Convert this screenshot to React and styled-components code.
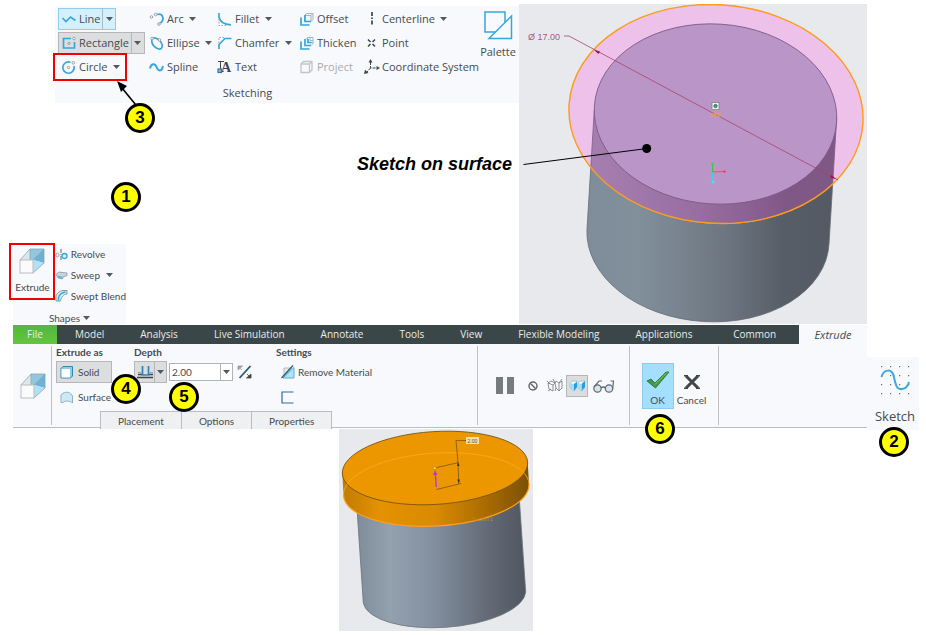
import React, { useState } from "react";
import styled, { createGlobalStyle, css } from "styled-components";

const GlobalStyle = createGlobalStyle`
  * {
    box-sizing: border-box;
  }

  body {
    margin: 0;
    background: #fff;
    color: #454b50;
    font-family: "Open Sans", "Noto Sans", sans-serif;
    font-size: 11px;
    line-height: 16px;
  }

  button,
  input {
    font: inherit;
    color: inherit;
    margin: 0;
    padding: 0;
    border: 0;
    background: none;
  }

  svg {
    display: block;
    flex: none;
  }
`;

const BLUE = "#36a7dd";
const GREY = "#9a9fa3";
const DARK = "#3f4447";

/* ---------- layout ---------- */

const Page = styled.main`
  padding-top: 4px;
`;

const TopRow = styled.section`
  display: grid;
  grid-template-columns: minmax(0, 1fr) 348px;
  margin-right: 59px;
`;

const LeftColumn = styled.div`
  display: flex;
  flex-direction: column;
`;

const DashboardRow = styled.section`
  display: flex;
  align-items: flex-start;
  margin: 1px 7px 0 13px;
`;

const ResultRow = styled.section`
  display: flex;
  justify-content: center;
  padding-right: 54px;
`;

/* ---------- callouts ---------- */

const Badge = styled.span`
  position: absolute;
  z-index: 2;
  left: ${(p) => p.$x}px;
  top: ${(p) => p.$y}px;
  width: 30px;
  height: 30px;
  border: 3px solid #000;
  border-radius: 50%;
  background: #ffff00;
  color: #000;
  font: bold 17px/24px "Liberation Sans", sans-serif;
  text-align: center;
`;

const Highlight = styled.span`
  position: absolute;
  inset: ${(p) => p.$inset};
  border: 2px solid #f00000;
  pointer-events: none;
`;

const Pointer = styled.svg`
  position: absolute;
  left: 58px;
  top: 72px;
`;

const Note = styled.p`
  align-self: flex-end;
  margin: 49px 7px 0 0;
  color: #000;
  font: italic bold 18px/24px "Liberation Sans", sans-serif;
`;

/* ---------- sketching ribbon ---------- */

const Ribbon = styled.div`
  position: relative;
  display: flex;
  margin: 2px 0 0 55px;
  height: 97px;
  padding-left: 3px;
  background: #f8f9fc;
`;

const ToolGroup = styled.div`
  flex: 1;
  min-width: 0;
`;

const ToolGrid = styled.div`
  display: grid;
  grid-template-columns: 88px 68px 82px 65px auto;
  grid-auto-rows: 24px;
  align-items: center;
  padding-top: 1px;
`;

const GroupLabel = styled.div`
  margin-top: 6px;
  padding-right: 40px;
  text-align: center;
`;

const Split = styled.div`
  position: relative;
  display: flex;
  justify-self: start;
  height: 22px;
  border: 1px solid transparent;
  white-space: nowrap;

  ${(p) =>
    p.$tone === "hover" &&
    css`
      background: #d5f0fd;
      border-color: #8fcdee;
    `}

  ${(p) =>
    p.$tone === "pressed" &&
    css`
      background: #dcddde;
      border-color: #b4b6b8;
    `}
`;

const Tool = styled.button`
  display: flex;
  align-items: center;
  gap: 2px;
  padding-left: 2px;
  opacity: ${(p) => (p.disabled ? 0.45 : 1)};
`;

const DropButton = styled.button`
  display: flex;
  align-items: center;
  justify-content: center;
  width: ${(p) => (p.$framed ? 13 : 10)}px;
  margin-left: ${(p) => (p.$framed ? 2 : 4)}px;
  border-left: ${(p) => (p.$framed ? "1px solid #a9bac4" : "0")};
`;

const PaletteButton = styled.button`
  display: flex;
  flex-direction: column;
  align-items: center;
  gap: 4px;
  width: 42px;
  padding-top: 4px;
  align-self: flex-start;
`;

/* ---------- shapes panel ---------- */

const Shapes = styled.div`
  position: relative;
  align-self: flex-start;
  margin: auto 0 0 13px;
  width: 113px;
  height: 80px;
  background: #f8f9fc;
  font-family: Lato, "Open Sans", sans-serif;
  font-size: 10px;
`;

const ShapesBody = styled.div`
  display: flex;
  height: 62px;
`;

const ExtrudeButton = styled.button`
  display: flex;
  flex-direction: column;
  align-items: center;
  gap: 6px;
  width: 39px;
  padding-top: 4px;
  line-height: 14px;
`;

const ShapeList = styled.div`
  display: flex;
  flex-direction: column;
  padding-left: 3px;
`;

const ShapeTool = styled.button`
  display: flex;
  align-items: center;
  gap: 3px;
  height: 21px;
  white-space: nowrap;
`;

const ShapesLabel = styled.button`
  display: flex;
  align-items: center;
  gap: 3px;
  margin: 5px auto 0;
  line-height: 14px;
`;

/* ---------- dashboard ---------- */

const Dashboard = styled.div`
  position: relative;
  flex: 1;
  height: 103px;
  background: #f8f9fc;
  border-bottom: 1px solid #b5c0c3;
  font-size: 10px;
`;

const TabStrip = styled.nav`
  display: flex;
  height: 19px;
`;

const Tab = styled.button`
  padding: 0 18px;
  background: #3b4648;
  color: #e9ecec;
  line-height: 19px;
  white-space: nowrap;

  &:nth-last-child(2) {
    flex: 1;
  }
`;

const FileTab = styled(Tab)`
  width: 44px;
  padding: 0;
  background: linear-gradient(#4fb748, #66c43c);
`;

const ActiveTab = styled(Tab)`
  width: 68px;
  padding: 0;
  background: #f8f9fc;
  color: #454b50;
  font-size: 11px;
  font-style: italic;
`;

const DashboardBody = styled.div`
  display: flex;
  height: 83px;
  font-family: Lato, "Open Sans", sans-serif;
`;

const Section = styled.div`
  position: relative;
  display: flex;
  align-items: center;
  justify-content: center;
  width: ${(p) => p.$width}px;
  gap: ${(p) => p.$gap || 0}px;

  &::after {
    content: "";
    position: absolute;
    right: 0;
    top: 2px;
    bottom: 2px;
    width: 1px;
    background: #bcc1c4;
  }
`;

const Options = styled(Section)`
  flex-direction: column;
  align-items: stretch;
  justify-content: space-between;
`;

const Fields = styled.div`
  display: flex;
  padding-left: 4px;
`;

const Field = styled.div`
  width: ${(p) => p.$width}px;
`;

const FieldTitle = styled.div`
  display: block;
  height: 17px;
  font-weight: 700;
`;

const FieldRow = styled.div`
  display: flex;
  align-items: center;
  height: 22px;
`;

const Choice = styled.button`
  display: flex;
  align-items: center;
  gap: 3px;
  width: 56px;
  height: 22px;
  margin-bottom: 3px;
  padding-left: 2px;
  border: 1px solid ${(p) => (p["aria-pressed"] ? "#b4b6b8" : "transparent")};
  background: ${(p) => (p["aria-pressed"] ? "#dcddde" : "none")};
`;

const SettingButton = styled.button`
  display: flex;
  align-items: center;
  gap: 2px;
  height: 22px;
  margin-bottom: 3px;
  padding-left: 4px;
  white-space: nowrap;
`;

const DepthType = styled.button`
  display: flex;
  align-items: center;
  justify-content: center;
  width: ${(p) => p.$width}px;
  height: 22px;
  border: 1px solid #b4b6b8;
  background: #dcddde;

  & + & {
    border-left: 0;
  }
`;

const Combo = styled.div`
  display: flex;
  width: 64px;
  height: 18px;
  margin: 0 4px 0 2px;
  border: 1px solid #b0b4b7;
  background: #fff;
`;

const ComboInput = styled.input`
  flex: 1;
  min-width: 0;
  padding-left: 2px;
`;

const ComboButton = styled.button`
  display: flex;
  align-items: center;
  justify-content: center;
  width: 12px;
  border-left: 1px solid #b0b4b7;
`;

const SlideTabs = styled.div`
  display: flex;
  padding-left: 48px;
`;

const SlideTab = styled.button`
  height: 18px;
  padding: 0 17px;
  border: 1px solid #b9bdc0;
  border-bottom: 0;
  background: #eff0f2;

  & + & {
    border-left: 0;
  }
`;

const IconButton = styled.button`
  display: flex;
  align-items: center;
  justify-content: center;
  width: ${(p) => p.$width || 22}px;
  height: 22px;
  border: 1px solid ${(p) => (p["aria-pressed"] ? "#b4b6b8" : "transparent")};
  background: ${(p) => (p["aria-pressed"] ? "#dcddde" : "none")};
`;

const Confirm = styled.button`
  display: flex;
  flex-direction: column;
  align-items: center;
  justify-content: flex-end;
  gap: 3px;
  width: 32px;
  height: 46px;
  border: 1px solid ${(p) => (p.$primary ? "#8ccbed" : "transparent")};
  background: ${(p) => (p.$primary ? "#a5dfff" : "none")};
`;

const SketchButton = styled.button`
  position: relative;
  display: flex;
  flex-direction: column;
  align-items: center;
  justify-content: space-between;
  width: 52px;
  height: 73px;
  margin-top: 32px;
  margin-bottom: -1px;
  padding: 7px 0 6px 4px;
  background: #f8f9fc;
  font-size: 13px;
`;

/* ---------- icons ---------- */

const Icon = ({ size = 16, children }) => (
  <svg
    width={size}
    height={size}
    viewBox={`0 0 ${size} ${size}`}
    fill="none"
    stroke={BLUE}
    strokeWidth="1.7"
    aria-hidden="true"
  >
    {children}
  </svg>
);

const Caret = () => (
  <svg width="7" height="4" viewBox="0 0 7 4" aria-hidden="true">
    <path d="M0 0h7L3.5 4z" fill="#54595d" />
  </svg>
);

const Handle = ({ x, y }) => (
  <circle cx={x} cy={y} r="1.3" stroke={GREY} strokeWidth="1" fill="#fff" />
);

const icons = {
  line: <path d="M1.5 7 5 10.500l4.500-4.500 5 3.500" />,
  rectangle: (
    <>
      <path d="M10 3.5H2.500v9.500h11V7" />
      <circle cx="8" cy="8.300" r="1.2" stroke={GREY} strokeWidth="1" />
      <Handle x={13} y={3.5} />
    </>
  ),
  circle: (
    <>
      <path d="M9.5 3.2A5.7 5.7 0 1 0 13 7" />
      <circle cx="7.5" cy="8.5" r="1.2" stroke={GREY} strokeWidth="1" />
      <Handle x={12.3} y={3.8} />
    </>
  ),
  arc: (
    <>
      <path d="M8 3.5c6-1.500 8 4.500 3.500 8.500" />
      <Handle x={2.5} y={6} />
      <Handle x={6.5} y={3.5} />
      <Handle x={10} y={13} />
    </>
  ),
  ellipse: (
    <>
      <ellipse cx="8" cy="8.5" rx="6.5" ry="4" transform="rotate(48 8 8.5)" />
      <Handle x={3} y={3.5} />
      <Handle x={10.5} y={5} />
    </>
  ),
  spline: <path d="M1 9.5C2 4 6 4 7.5 8s5 5.500 6.500-1" strokeWidth="2" />,
  fillet: (
    <>
      <path d="M2 2v4c1 5 6 7.5 12 7.8" />
      <path d="M2 8v6.5h7" stroke={GREY} strokeDasharray="1.5 1.5" strokeWidth="1" />
    </>
  ),
  chamfer: (
    <>
      <path d="M2 14V9.5l6-6h6.5" />
      <path d="M2 8V2.5h5" stroke={GREY} strokeDasharray="1.5 1.5" strokeWidth="1" />
    </>
  ),
  text: (
    <>
      <path d="M1 2.5h6M3.5 2.5v8" stroke={DARK} strokeWidth="1" />
      <text
        x="4"
        y="13"
        fill={DARK}
        stroke="none"
        fontFamily="Liberation Serif, serif"
        fontWeight="bold"
        fontSize="14"
      >
        A
      </text>
      <rect x="1" y="10" width="3.5" height="3.5" stroke="#2b79a4" strokeWidth="1.2" fill="#78bfe2" />
    </>
  ),
  offset: (
    <>
      <path
        d="M5.5 4.5l2-2H14v6l-2 2H5.5zM5.500 4.500H12v6M12 4.500l2-2"
        fill="#f1f3f4"
        stroke="#aeb3b6"
        strokeWidth="1"
      />
      <path d="M6 4v6.500h6M2 6.500V14h8.500" />
    </>
  ),
  thicken: (
    <>
      <path d="M7 4.500l1.500-2H14v6l-2 2M8.500 2.500v5H14M11 2.500v3h3" stroke="#9ab9c8" strokeWidth="1" />
      <path d="M6 4v6.500h6M9 4v3.500h3.500M2 6.500V14h8.500" />
    </>
  ),
  project: (
    <path
      d="M2 5h8.500v8.500H2zM2 5l2.500-2.500H13V11l-2.500 2.500M10.500 5 13 2.500"
      stroke="#85898c"
      strokeWidth="1.300"
    />
  ),
  centerline: <path d="M8 1v14" stroke={DARK} strokeDasharray="4 1.500 1.500 1.500" />,
  point: (
    <path
      d="M4 4.500 6.500 7m2 2L11 11.500m0-7L8.500 7m-2 2L4 11.500"
      stroke={DARK}
      strokeWidth="1.500"
    />
  ),
  csys: (
    <>
      <path d="M6.500 3v6h6M6.500 9 3 13" stroke={DARK} strokeWidth="1" strokeDasharray="3 1" />
      <path d="M6.500 0l2 3.500h-4zM16 9l-3.500 2V7zM0 15l1-4.200L4.500 14z" fill={DARK} stroke="none" />
    </>
  ),
  revolve: (
    <>
      <path d="M6 1v12" stroke="#62676b" strokeWidth="1" strokeDasharray="4 1 1 1" />
      <ellipse cx="2.500" cy="7" rx="1.500" ry="2" stroke={GREY} strokeWidth="1" />
      <circle cx="9.500" cy="8" r="2.500" fill="#d5effb" strokeWidth="1.300" />
    </>
  ),
  sweep: (
    <>
      <path d="M1 5.500 4 3l8 1v2.500L8 8l-.500 2-4.500-1z" fill="#cbd4d9" stroke="#8b979f" strokeWidth=".8" />
      <path d="M3 6.500 7.500 7.500V10L3 9z" fill="#6bb8df" stroke="none" />
    </>
  ),
  blend: (
    <>
      <path d="M1 12V8c0-3 3-6 7-6.500h4L12 5C9 5 6 8 5.500 12z" fill="#d9eef8" stroke="#8b979e" strokeWidth="1" />
      <path d="M3.500 11.500V9C4 6 7 3.500 10.500 3" stroke={BLUE} strokeWidth="1.500" />
    </>
  ),
  solid: (
    <>
      <path d="M2 4.500l2-2h9.500V12l-2 2H2z" fill="#8dcdeb" stroke="#2f88b5" strokeWidth="1" />
      <path d="M2.500 5h8.500v8.500H2.500z" fill="#fff" stroke="none" />
    </>
  ),
  surface: (
    <path
      d="M2 13.500V6c2-3 7-3.500 9.500-1.700L13.500 7v7c-2.500-2.500-8-2.500-9.500-.5z"
      fill="#cbe9f6"
      stroke="#8db5c6"
      strokeWidth="1"
    />
  ),
  depth: (
    <>
      <path d="M1 10.500h4m7 0h4M0 13.500h16" stroke={DARK} strokeWidth="1.300" />
      <path d="M1 8.500h3m9 0h3" stroke={GREY} strokeWidth="1" />
      <path d="M5.500 2v9h6V2" stroke="#2b86b5" />
    </>
  ),
  flip: (
    <>
      <path d="m2.500 14 11-12" stroke="#235a7c" strokeWidth="1.800" />
      <path d="M1 2h4.500L1 6zM3 4l2 2" fill={GREY} stroke={GREY} strokeWidth=".8" />
      <path d="M14 14H9.500L14 10zM12 12l-2-2" fill={DARK} stroke={DARK} strokeWidth=".8" />
    </>
  ),
  remove: (
    <>
      <path d="M4 4h8L4 12z" fill="#e5e8e9" stroke="#b7bcbf" strokeWidth="1" />
      <path d="M14 3.500V14H3z" fill="#abe3fa" stroke="#5eaed0" strokeWidth="1" />
      <path d="M1.500 14 13 1.500" stroke="#245f85" strokeWidth="1.300" />
    </>
  ),
  thickenSketch: <path d="M13.500 3H2v11h11.500" stroke="#27719b" strokeWidth="1.200" />,
  noPreview: (
    <>
      <circle cx="8" cy="8" r="4" stroke="#606467" strokeWidth="1.400" />
      <path d="m5.200 5.200 5.600 5.600" stroke="#606467" strokeWidth="1.400" />
    </>
  ),
  detached: (
    <path
      d="M1 5l3-2 4 2-2 2-5-2 1 6 4 2V7M8 5l1-2 3 2 3-2v7l-3 3-3-3zM12 5v8M0 3l3 3M6 1l2 4M15 1l-3 4M1 13l3-2M8 13l1-3"
      stroke="#73787b"
      strokeWidth=".8"
    />
  ),
  attached: (
    <>
      <path d="M1 5l2-2h5L7 5v5l-2 3-4-3zM9 5l2-2h5v6l-3 4-4-3z" fill="#f1fafe" stroke="#a9b8c0" strokeWidth=".8" />
      <path d="M5 6l3-2v5l-3 4zM12.500 6 16 3v6l-3.500 4z" fill="#229fdc" stroke="none" />
      <path d="M1 5l4 1v7l-4-3zM9 5l3.500 1v7L9 10z" fill="#a9dcf4" stroke="none" />
    </>
  ),
};

const BoxIcon = () => (
  <svg width="26" height="26" viewBox="0 0 26 26" aria-hidden="true">
    <path d="M1 12 11 1v11z" fill="#dfe5e8" />
    <path d="M11 1h14L14 12h-3z" fill="#96c6de" />
    <path d="M25 1v14l-11-3z" fill="#6fb2d6" />
    <path d="M14 12l11 3-11 10z" fill="#b2e1f5" />
    <path d="M1 12 11 1h14v14L14 25M11 1v11M25 1 14 12" fill="none" stroke="#7fa8bb" strokeWidth=".8" />
    <rect x="1" y="12" width="13" height="13" fill="#fbfbfb" stroke="#b9bdc0" />
  </svg>
);

const PaletteIcon = () => (
  <svg width="30" height="30" viewBox="0 0 30 30" fill="none" stroke={BLUE} strokeWidth="1.500" aria-hidden="true">
    <path d="M2 2h20v20H2z" />
    <path d="M28.500 6v22.500H6z" fill="#f8f9fc" />
  </svg>
);

const PauseIcon = () => (
  <svg width="18" height="17" viewBox="0 0 18 17" aria-hidden="true">
    <path d="M0 0h7v17H0zM11 0h7v17h-7z" fill="#777b7e" />
  </svg>
);

const GlassesIcon = () => (
  <svg width="22" height="14" viewBox="0 0 22 14" fill="#d5e7ee" stroke="#63686b" strokeWidth="1.200" aria-hidden="true">
    <circle cx="4.500" cy="9.500" r="3.700" />
    <circle cx="16" cy="9.500" r="3.700" />
    <path d="M8 9q2.200-2 4.500 0M1 8l5-6h3M19.700 9.500 20.500 2h-3" fill="none" />
  </svg>
);

const CheckIcon = () => (
  <svg width="24" height="18" viewBox="0 0 24 18" aria-hidden="true">
    <path d="M1 10l4-2 4 4L20 1h3L9.500 17z" fill="#3d9a48" stroke="#276c34" strokeWidth=".8" />
    <path d="M9 13.500 21 1.500" stroke="#9fd05a" strokeWidth=".8" />
  </svg>
);

const CrossIcon = () => (
  <svg width="16" height="14" viewBox="0 0 16 14" aria-hidden="true">
    <path d="M2 1l12 12M14 1 2 13" stroke="#434648" strokeWidth="3" />
    <path d="M0 .7h4M12 .7h4M0 13.300h4M12 13.300h4" stroke="#434648" strokeWidth="1.400" />
  </svg>
);

const SketchIcon = () => (
  <svg width="32" height="32" viewBox="0 0 32 32" aria-hidden="true">
    {[2, 11, 20, 29].map((y) =>
      [2, 11, 20, 29].map((x) => (
        <rect key={`${x}-${y}`} x={x} y={y} width="1.200" height="1.200" fill="#666b6e" />
      ))
    )}
    <path
      d="M2.500 13C4.500 5 13 4 15 13c1.500 8 3 13 8 12 4-.5 6-3 7-7"
      fill="none"
      stroke="#3fa9dc"
      strokeWidth="2"
    />
  </svg>
);

/* ---------- model views ---------- */

const SketchView = () => (
  <svg width="100%" viewBox="0 0 348 320" role="img" aria-label="Sketch on surface">
    <defs>
      <linearGradient id="steel">
        <stop offset="0" stopColor="#7f8d9a" />
        <stop offset=".2" stopColor="#82909c" />
        <stop offset=".55" stopColor="#6d7681" />
        <stop offset=".78" stopColor="#575e68" />
        <stop offset="1" stopColor="#545a64" />
      </linearGradient>
      <linearGradient id="tinted">
        <stop offset="0" stopColor="#a67fb1" />
        <stop offset=".45" stopColor="#986ea2" />
        <stop offset=".8" stopColor="#805886" />
        <stop offset="1" stopColor="#805886" />
      </linearGradient>
      <clipPath id="sketchArea">
        <ellipse cx="197" cy="110" rx="147.600" ry="109.800" transform="rotate(3.900 197 110)" />
      </clipPath>
    </defs>
    <rect width="348" height="320" fill="#e8e9ed" />
    <path
      d="M75.300 106 68 225A121 85 4 0 0 310 240L317.700 114z"
      fill="url(#steel)"
      stroke="#626c75"
      strokeWidth=".8"
    />
    <g clipPath="url(#sketchArea)">
      <rect width="348" height="320" fill="#eec1eb" />
      <path
        d="M75.300 106 68 225A121 85 4 0 0 310 240L317.700 114z"
        fill="url(#tinted)"
        stroke="#805b89"
        strokeWidth=".8"
      />
    </g>
    <ellipse
      cx="196.500"
      cy="110"
      rx="121.400"
      ry="90"
      transform="rotate(3.900 196.500 110)"
      fill="#ba96c8"
      stroke="#7e5a88"
      strokeWidth=".9"
    />
    <ellipse
      cx="197"
      cy="110"
      rx="147.200"
      ry="109.300"
      transform="rotate(3.900 197 110)"
      fill="none"
      stroke="#ff9c16"
      strokeWidth="1.400"
    />
    <path d="M45 32h5L319 176" fill="none" stroke="#aa416d" strokeWidth=".8" />
    <path d="m75 46 6 1.500-1.500 2.500zM317 175l-6-1.500 1.500-2.500z" fill="#a11443" />
    <text x="9" y="36" fill="#a95782" fontFamily="Liberation Sans, sans-serif" fontSize="9">
      Ø 17.00
    </text>
    <rect x="193" y="98.500" width="7" height="7" fill="#f6f6e8" stroke="#777b70" strokeWidth=".7" />
    <circle cx="196.500" cy="102" r="1.800" fill="#43988c" stroke="#345e70" strokeWidth=".6" />
    <path d="M191.500 110H202M196.500 105.500v8.500M192.500 113l2-1.500M200.500 113l-2-1.500" stroke="#ff9a23" strokeWidth="1.200" />
    <path d="M193.500 168v-8" stroke="#3cbc51" />
    <path d="M193.500 168l12-.5" stroke="#ef5167" />
    <path d="M193.500 168l.5 10" stroke="#34d5e9" />
    <circle cx="193.500" cy="160" r="1.500" fill="#2bdc39" />
    <circle cx="205.500" cy="167.500" r="1.200" fill="#ff3851" />
    <circle cx="194" cy="178" r="1.500" fill="#35e6fc" />
    <path d="M4.500 160.500 128 144.500" stroke="#000" />
    <circle cx="127.700" cy="144.500" r="4.500" />
  </svg>
);

const ResultView = () => (
  <svg width="194" height="202" viewBox="0 0 194 202" role="img" aria-label="Extruded disc">
    <defs>
      <linearGradient id="post">
        <stop offset="0" stopColor="#7f8c99" />
        <stop offset=".2" stopColor="#93a1af" />
        <stop offset=".45" stopColor="#8390a0" />
        <stop offset=".75" stopColor="#656d78" />
        <stop offset="1" stopColor="#505660" />
      </linearGradient>
      <linearGradient id="rim">
        <stop offset="0" stopColor="#c07b00" />
        <stop offset=".2" stopColor="#e49200" />
        <stop offset=".5" stopColor="#d98a00" />
        <stop offset=".75" stopColor="#ad6e00" />
        <stop offset="1" stopColor="#7b5005" />
      </linearGradient>
    </defs>
    <rect width="194" height="202" fill="#e8e9ed" />
    <path
      d="M17.700 75 24.300 174A81.500 31.500-4 0 0 186.700 163L180 65z"
      fill="url(#post)"
      stroke="#69737d"
      strokeWidth=".8"
    />
    <path d="M3.300 44 4.500 66A92.850 36.400-3.600 0 0 190 55L188.700 33z" fill="url(#rim)" />
    <ellipse
      cx="96"
      cy="39"
      rx="92.850"
      ry="36.400"
      transform="rotate(-3.600 96 39)"
      fill="#ed9700"
      stroke="#785611"
      strokeWidth=".9"
    />
    <path d="M4.500 66A92.850 36.400-3.600 0 0 190 55" fill="none" stroke="#ff9f16" strokeWidth="1.200" />
    <path d="M4.500 66A92.850 36.400-3.600 0 1 190 55" fill="none" stroke="#ffa91e" strokeWidth=".8" />
    <path
      d="M127 11.500h-10l2 22 .8 21M96 39l23.500-5.500M97.500 60.500 122 54.500"
      fill="none"
      stroke="#7b541a"
      strokeWidth=".8"
    />
    <path d="m119 33 1.500 4h-2.500zM119.800 54.500l1-4h-2.500z" fill="#403018" />
    <path d="m97.300 58-1-13" stroke="#b338dc" strokeWidth="1.400" />
    <path d="m96 41 2.500 5h-4.500z" fill="#b338dc" />
    <circle cx="95.700" cy="39" r="1.600" fill="#f0e218" stroke="#8b7a18" strokeWidth=".5" />
    <rect x="127" y="8" width="13" height="7" fill="#f6dcae" />
    <text x="128.500" y="13.500" fill="#67512d" fontFamily="Liberation Sans, sans-serif" fontSize="5">
      2.00
    </text>
    <text x="133" y="92" fill="#c88425" fontFamily="Liberation Sans, sans-serif" fontSize="5">
      Section 1
    </text>
  </svg>
);

/* ---------- page ---------- */

const tools = [
  { icon: "line", label: "Line", drop: true, tone: "hover" },
  { icon: "arc", label: "Arc", drop: true },
  { icon: "fillet", label: "Fillet", drop: true },
  { icon: "offset", label: "Offset" },
  { icon: "centerline", label: "Centerline", drop: true },
  { icon: "rectangle", label: "Rectangle", drop: true, tone: "pressed" },
  { icon: "ellipse", label: "Ellipse", drop: true },
  { icon: "chamfer", label: "Chamfer", drop: true },
  { icon: "thicken", label: "Thicken" },
  { icon: "point", label: "Point" },
  { icon: "circle", label: "Circle", drop: true },
  { icon: "spline", label: "Spline" },
  { icon: "text", label: "Text" },
  { icon: "project", label: "Project", disabled: true },
  { icon: "csys", label: "Coordinate System" },
];

const tabs = [
  "Model",
  "Analysis",
  "Live Simulation",
  "Annotate",
  "Tools",
  "View",
  "Flexible Modeling",
  "Applications",
  "Common",
];

const SketchRibbon = () => (
  <Ribbon>
    <ToolGroup>
      <ToolGrid>
        {tools.map(({ icon, label, drop, tone, disabled }) => (
          <Split key={label} $tone={tone}>
            <Tool disabled={disabled}>
              <Icon>{icons[icon]}</Icon>
              {label}
            </Tool>
            {drop && (
              <DropButton $framed={!!tone} aria-label={`${label} options`}>
                <Caret />
              </DropButton>
            )}
            {label === "Circle" && <Highlight $inset="-4px -6px -4px -6px" />}
          </Split>
        ))}
      </ToolGrid>
      <GroupLabel>Sketching</GroupLabel>
    </ToolGroup>
    <PaletteButton>
      <PaletteIcon />
      Palette
    </PaletteButton>
    <Pointer width="30" height="34" viewBox="0 0 30 34" aria-hidden="true">
      <path d="M27 32 9 10" stroke="#000" strokeWidth="1.600" />
      <path d="m4 3 10 5-6 6z" />
    </Pointer>
    <Badge $x={70} $y={97}>3</Badge>
    <Badge $x={56} $y={176}>1</Badge>
  </Ribbon>
);

const ShapesPanel = () => (
  <Shapes>
    <ShapesBody>
      <ExtrudeButton>
        <BoxIcon />
        Extrude
      </ExtrudeButton>
      <ShapeList>
        <ShapeTool>
          <Icon size={13}>{icons.revolve}</Icon>
          Revolve
        </ShapeTool>
        <ShapeTool>
          <Icon size={13}>{icons.sweep}</Icon>
          Sweep&nbsp;
          <Caret />
        </ShapeTool>
        <ShapeTool>
          <Icon size={13}>{icons.blend}</Icon>
          Swept Blend
        </ShapeTool>
      </ShapeList>
    </ShapesBody>
    <ShapesLabel>
      Shapes
      <Caret />
    </ShapesLabel>
    <Highlight $inset="-1px 71px 24px -4px" />
  </Shapes>
);

const ExtrudeDashboard = () => {
  const [type, setType] = useState("solid");
  const [depth, setDepth] = useState("2.00");

  return (
    <Dashboard>
      <TabStrip>
        <FileTab>File</FileTab>
        {tabs.map((tab) => (
          <Tab key={tab}>{tab}</Tab>
        ))}
        <ActiveTab>Extrude</ActiveTab>
      </TabStrip>
      <DashboardBody>
        <Section $width={39}>
          <BoxIcon />
        </Section>
        <Options $width={426}>
          <Fields>
            <Field $width={78}>
              <FieldTitle>Extrude as</FieldTitle>
              <Choice aria-pressed={type === "solid"} onClick={() => setType("solid")}>
                <Icon>{icons.solid}</Icon>
                Solid
              </Choice>
              <Choice aria-pressed={type === "surface"} onClick={() => setType("surface")}>
                <Icon>{icons.surface}</Icon>
                Surface
              </Choice>
            </Field>
            <Field $width={142}>
              <FieldTitle as="label" htmlFor="depth">
                Depth
              </FieldTitle>
              <FieldRow>
                <DepthType $width={21} aria-label="Blind">
                  <Icon>{icons.depth}</Icon>
                </DepthType>
                <DepthType $width={12} aria-label="Depth options">
                  <Caret />
                </DepthType>
                <Combo>
                  <ComboInput id="depth" value={depth} onChange={(e) => setDepth(e.target.value)} />
                  <ComboButton aria-label="Recent values">
                    <Caret />
                  </ComboButton>
                </Combo>
                <button aria-label="Flip direction">
                  <Icon>{icons.flip}</Icon>
                </button>
              </FieldRow>
            </Field>
            <Field $width={120}>
              <FieldTitle>Settings</FieldTitle>
              <SettingButton>
                <Icon>{icons.remove}</Icon>
                Remove Material
              </SettingButton>
              <SettingButton aria-label="Thicken sketch">
                <Icon>{icons.thickenSketch}</Icon>
              </SettingButton>
            </Field>
          </Fields>
          <SlideTabs>
            <SlideTab>Placement</SlideTab>
            <SlideTab>Options</SlideTab>
            <SlideTab>Properties</SlideTab>
          </SlideTabs>
        </Options>
        <Section $width={152}>
          <IconButton $width={34} aria-label="Pause">
            <PauseIcon />
          </IconButton>
          <IconButton aria-label="No preview">
            <Icon>{icons.noPreview}</Icon>
          </IconButton>
          <IconButton aria-label="Unattached preview">
            <Icon>{icons.detached}</Icon>
          </IconButton>
          <IconButton aria-label="Attached preview" aria-pressed>
            <Icon>{icons.attached}</Icon>
          </IconButton>
          <IconButton $width={32} aria-label="Verify">
            <GlassesIcon />
          </IconButton>
        </Section>
        <Section $width={89} $gap={2}>
          <Confirm $primary>
            <CheckIcon />
            OK
          </Confirm>
          <Confirm>
            <CrossIcon />
            Cancel
          </Confirm>
        </Section>
      </DashboardBody>
      <Badge $x={98} $y={49}>4</Badge>
      <Badge $x={156} $y={57}>5</Badge>
      <Badge $x={632} $y={89}>6</Badge>
    </Dashboard>
  );
};

const App = () => (
  <>
    <GlobalStyle />
    <Page>
      <TopRow>
        <LeftColumn>
          <SketchRibbon />
          <Note>Sketch on surface</Note>
          <ShapesPanel />
        </LeftColumn>
        <SketchView />
      </TopRow>
      <DashboardRow>
        <ExtrudeDashboard />
        <SketchButton>
          <SketchIcon />
          Sketch
          <Badge $x={12} $y={70}>2</Badge>
        </SketchButton>
      </DashboardRow>
      <ResultRow>
        <ResultView />
      </ResultRow>
    </Page>
  </>
);

export default App;
